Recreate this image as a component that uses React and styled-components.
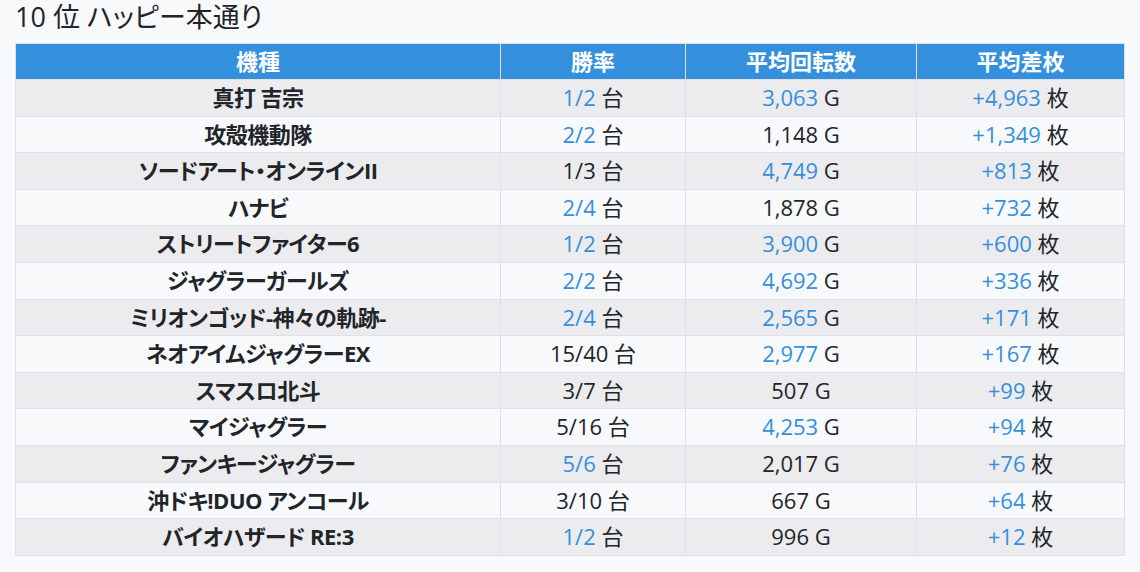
import styled, { createGlobalStyle } from 'styled-components';

const GlobalStyle = createGlobalStyle`
  html, body {
    margin: 0;
    padding: 0;
    background: #f8f9fb;
  }
  body {
    font-family: "Open Sans", "Noto Sans CJK JP", sans-serif;
    font-feature-settings: "palt";
    color: #212529;
  }
`;

const Page = styled.div`
  padding: 0 15px;
`;

const Title = styled.h2`
  margin: 0 0 9px;
  height: 34px;
  font-size: 27px;
  font-weight: 400;
  line-height: 34px;
  color: #212529;
`;

const Table = styled.table`
  width: 100%;
  table-layout: fixed;
  border-collapse: collapse;
  border: 1px solid #dee2e6;
  font-size: 22px;
`;

const Head = styled.th`
  height: 35px;
  padding: 0;
  background: #3490dc;
  color: #fff;
  font-weight: 700;
  line-height: 35px;
  text-align: center;
  border-left: 1px solid #dee2e6;
`;

const Row = styled.tr`
  background: ${(p) => (p.$odd ? '#ececef' : '#f8f9fb')};
`;

const Cell = styled.td`
  padding: 4px 0;
  line-height: 27.6px;
  text-align: center;
  white-space: nowrap;
  font-weight: ${(p) => (p.$bold ? 700 : 400)};
  letter-spacing: ${(p) => (p.$bold ? '-0.5px' : '0')};
  border: 1px solid #dee2e6;
`;

const Num = styled.span`
  color: ${(p) => (p.$hi ? '#3490dc' : '#212529')};
`;

const rows = [
  ['真打 吉宗', '1/2', true, '3,063', true, '+4,963', true],
  ['攻殻機動隊', '2/2', true, '1,148', false, '+1,349', true],
  ['ソードアート・オンラインII', '1/3', false, '4,749', true, '+813', true],
  ['ハナビ', '2/4', true, '1,878', false, '+732', true],
  ['ストリートファイター6', '1/2', true, '3,900', true, '+600', true],
  ['ジャグラーガールズ', '2/2', true, '4,692', true, '+336', true],
  ['ミリオンゴッド-神々の軌跡-', '2/4', true, '2,565', true, '+171', true],
  ['ネオアイムジャグラーEX', '15/40', false, '2,977', true, '+167', true],
  ['スマスロ北斗', '3/7', false, '507', false, '+99', true],
  ['マイジャグラー', '5/16', false, '4,253', true, '+94', true],
  ['ファンキージャグラー', '5/6', true, '2,017', false, '+76', true],
  ['沖ドキ!DUO アンコール', '3/10', false, '667', false, '+64', true],
  ['バイオハザード RE:3', '1/2', true, '996', false, '+12', true],
];

export default function App() {
  return (
    <Page>
      <GlobalStyle />
      <Title>10 位 ハッピー本通り</Title>
      <Table>
        <colgroup>
          <col style={{ width: 485 }} />
          <col style={{ width: 185 }} />
          <col style={{ width: 231 }} />
          <col />
        </colgroup>
        <thead>
          <tr>
            <Head>機種</Head>
            <Head>勝率</Head>
            <Head>平均回転数</Head>
            <Head>平均差枚</Head>
          </tr>
        </thead>
        <tbody>
          {rows.map(([name, rate, rateHi, spins, spinsHi, diff, diffHi], i) => (
            <Row key={name} $odd={i % 2 === 0}>
              <Cell $bold>{name}</Cell>
              <Cell>
                <Num $hi={rateHi}>{rate}</Num> 台
              </Cell>
              <Cell>
                <Num $hi={spinsHi}>{spins}</Num> G
              </Cell>
              <Cell>
                <Num $hi={diffHi}>{diff}</Num> 枚
              </Cell>
            </Row>
          ))}
        </tbody>
      </Table>
    </Page>
  );
}
